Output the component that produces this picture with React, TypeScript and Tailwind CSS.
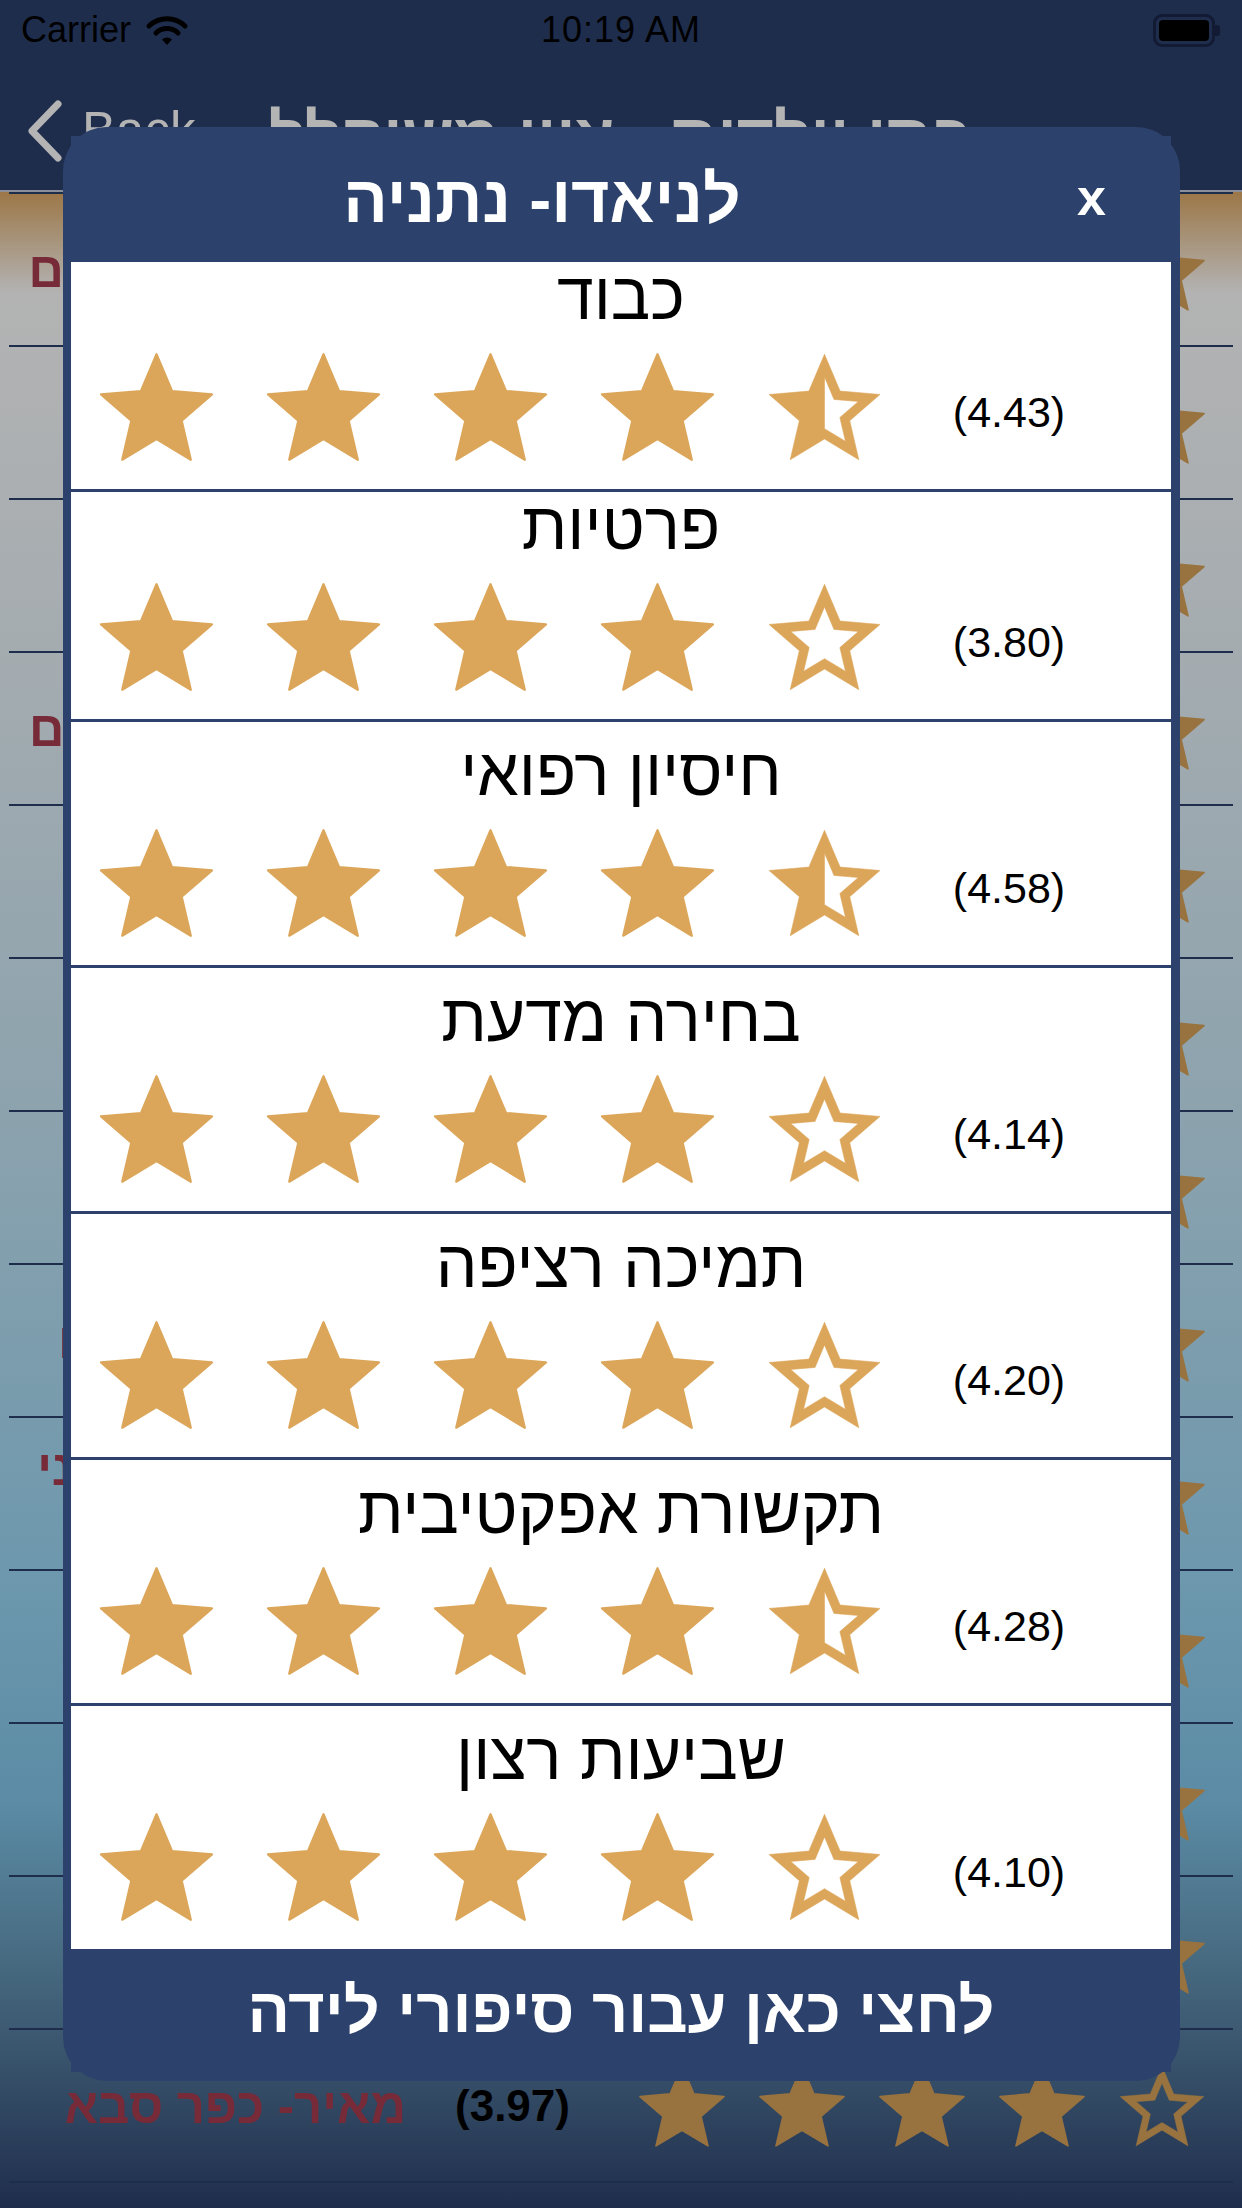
import React from "react"

type Kind = "full" | "half" | "empty"

const starPaths: Record<Kind, string> = {
    full: "M12 17.27L18.18 21l-1.64-7.03L22 9.24l-7.19-.61L12 2 9.19 8.63 2 9.24l5.46 4.73L5.82 21z",
    half: "M22 9.24l-7.19-.62L12 2 9.19 8.63 2 9.24l5.46 4.73L5.82 21 12 17.27 18.18 21l-1.63-7.03L22 9.24zM12 15.4V6.1l1.71 4.04 4.38.38-3.32 2.88 1 4.28L12 15.4z",
    empty: "M22 9.24l-7.19-.62L12 2 9.19 8.63 2 9.24l5.46 4.73L5.82 21 12 17.27 18.18 21l-1.63-7.03L22 9.24zM12 15.4l-3.76 2.27 1-4.28-3.32-2.88 4.38-.38L12 6.1l1.71 4.04 4.38.38-3.32 2.88 1 4.28L12 15.4z",
}

function Star({ kind, className }: { kind: Kind; className: string }) {
    return (
        <svg viewBox="2 2 20 19" className={`overflow-visible shrink-0 ${className}`}>
            <path
                d={starPaths[kind]}
                fill="currentColor"
                fillRule="evenodd"
                stroke="currentColor"
                strokeWidth={kind === "full" ? 0.4 : 0.1}
                strokeLinejoin="round"
            />
        </svg>
    )
}

const categories: { title: string; rating: string; stars: Kind[]; short?: boolean }[] = [
    { title: "כבוד", rating: "4.43", stars: ["full", "full", "full", "full", "half"], short: true },
    { title: "פרטיות", rating: "3.80", stars: ["full", "full", "full", "full", "empty"], short: true },
    { title: "חיסיון רפואי", rating: "4.58", stars: ["full", "full", "full", "full", "half"] },
    { title: "בחירה מדעת", rating: "4.14", stars: ["full", "full", "full", "full", "empty"] },
    { title: "תמיכה רציפה", rating: "4.20", stars: ["full", "full", "full", "full", "empty"] },
    { title: "תקשורת אפקטיבית", rating: "4.28", stars: ["full", "full", "full", "full", "half"] },
    { title: "שביעות רצון", rating: "4.10", stars: ["full", "full", "full", "full", "empty"] },
]

// rows of the list behind the popup, only their edges show
const hospitals: { name: string[]; rating: string; spacing?: string }[] = [
    { name: ["שערי צדק ירושלים"], rating: "4.62", spacing: "tracking-[-1.7px]" },
    { name: ["רמב\"ם - חיפה"], rating: "4.58" },
    { name: ["איכילוב"], rating: "4.55" },
    { name: ["הדסה - הר הצופים"], rating: "4.51", spacing: "tracking-[-1.7px]" },
    { name: ["בילינסון"], rating: "4.47" },
    { name: ["וולפסון"], rating: "4.40" },
    { name: ["ברזילי"], rating: "4.33" },
    { name: ["יוספטל - בת ים"], rating: "4.30", spacing: "tracking-[1.3px]" },
    { name: ["מרכז רפואי צפוני", "נהריה"], rating: "4.21" },
    { name: ["העמק"], rating: "4.15" },
    { name: ["סורוקה"], rating: "4.12" },
    { name: ["לניאדו - נתניה"], rating: "4.02" },
    { name: ["מאיר- כפר סבא"], rating: "3.97" },
]

function StatusBar() {
    return (
        <div className="h-[60px] flex items-center justify-between px-[21px] text-black text-[36px] font-['Liberation_Sans',sans-serif]">
            <div className="flex items-center gap-[14px] w-[300px]">
                <span>Carrier</span>
                <svg viewBox="0 0 44 32" className="w-[44px] h-[32px]">
                    <path d="M4 12a26 26 0 0 1 36 0" fill="none" stroke="black" strokeWidth="5" strokeLinecap="round" />
                    <path d="M11 19a16 16 0 0 1 22 0" fill="none" stroke="black" strokeWidth="5" strokeLinecap="round" />
                    <path d="M17 25.5l5 5.5 5-5.5a7.5 7.5 0 0 0-10 0z" fill="black" />
                </svg>
            </div>
            <span className="tracking-[1px]">10:19 AM</span>
            <div className="w-[300px] flex justify-end items-center pr-[1px]">
                <div className="w-[62px] h-[33px] border-[3px] border-[#121b33] rounded-[9px] p-[3px]">
                    <div className="w-full h-full bg-black rounded-[4px]" />
                </div>
                <div className="w-[5px] h-[11px] bg-[#121b33] rounded-r-[3px]" />
            </div>
        </div>
    )
}

function NavBar() {
    return (
        <div className="h-[132px] relative flex items-center justify-center border-b-[2px] border-[#8a8f99]">
            <div className="absolute left-[26px] top-[33px] flex items-center gap-[20px] text-[#b4b4b4]">
                <svg viewBox="0 0 36 62" className="w-[36px] h-[62px]">
                    <path d="M32 4L6 31l26 27" fill="none" stroke="currentColor" strokeWidth="7" strokeLinecap="round" strokeLinejoin="round" />
                </svg>
                <span className="text-[51px] font-['Liberation_Sans',sans-serif]">Back</span>
            </div>
            <h1 dir="rtl" className="text-[64px] font-bold text-[#b4b4b4] mt-[24px]">בתי יולדות - ציון משוקלל</h1>
        </div>
    )
}

function HospitalRow({ name, rating, spacing }: { name: string[]; rating: string; spacing?: string }) {
    return (
        <div className="mx-[9px] h-[153px] border-b-[2px] border-[#1f2d4d] flex items-center pr-[29px]">
            <div
                dir="rtl"
                className={`flex-1 min-w-0 flex flex-col items-start mr-[47px] text-[49px] leading-[52px] font-bold text-[#772a37] whitespace-nowrap ${spacing ?? ""}`}
            >
                {name.map((line) => (
                    <span key={line}>{line}</span>
                ))}
            </div>
            <span className="w-[119px] shrink-0 text-center text-[44px] font-bold text-black mr-[68px]">({rating})</span>
            <div className="flex gap-[36px] text-[#98733f]">
                {["full", "full", "full", "full", rating === "3.97" ? "empty" : "full"].map((k, i) => (
                    <Star key={i} kind={k as Kind} className="w-[84px] h-[80px]" />
                ))}
            </div>
        </div>
    )
}

function CategoryRow({ title, rating, stars, short }: { title: string; rating: string; stars: Kind[]; short?: boolean }) {
    return (
        <div className={`bg-white flex flex-col ${short ? "h-[227px] pt-[2px]" : "h-[243px] pt-[18px]"}`}>
            <p dir="rtl" className="text-center text-[66px] leading-[64px] text-black">{title}</p>
            <div className="flex items-center pl-[30px] mt-[26px] h-[106px]">
                <div className="flex gap-[56px] text-[#dca65a]">
                    {stars.map((k, i) => (
                        <Star key={i} kind={k} className="w-[111px] h-[106px]" />
                    ))}
                </div>
                <span className="ml-[29px] w-[200px] text-center text-[43px] text-black mt-[10px]">({rating})</span>
            </div>
        </div>
    )
}

export default function App() {
    return (
        <div className="relative w-[1242px] h-[2208px] overflow-hidden font-['Liberation_Sans','DejaVu_Sans',sans-serif]">
            <div className="bg-[#1f2d4d]">
                <StatusBar />
                <NavBar />
            </div>
            <div className="h-[2016px] bg-[linear-gradient(180deg,#9c7747_0%,#b3b3b3_5%,#a5acb0_22%,#8da3ae_45%,#6b97ad_70%,#5b8ba5_80%,#46697f_88%,#37516a_93%,#1f2d4c_100%)]">
                <div className="mx-[9px] h-[2px] bg-[#1f2d4d]" />
                {hospitals.map((h) => (
                    <HospitalRow key={h.name[0]} name={h.name} rating={h.rating} spacing={h.spacing} />
                ))}
            </div>

            <div className="absolute left-[63px] top-[127px] w-[1117px] h-[1954px] rounded-[44px] bg-[#2c426c] pt-[9px] pb-[9px] pl-[8px] pr-[9px]">
                <div className="h-full bg-[#2c426c] flex flex-col">
                    <div className="h-[126px] relative flex items-center justify-center">
                        <h2 dir="rtl" className="text-[66px] font-bold text-white mr-[158px]">לניאדו- נתניה</h2>
                        <span className="absolute right-[65px] top-[22px] text-[52px] font-bold text-white">x</span>
                    </div>
                    <div className="flex flex-col gap-[3px]">
                        {categories.map((c) => (
                            <CategoryRow key={c.title} {...c} />
                        ))}
                    </div>
                    <div className="flex-1 flex items-center justify-center">
                        <span dir="rtl" className="text-[63px] font-bold text-white">לחצי כאן עבור סיפורי לידה</span>
                    </div>
                </div>
            </div>
        </div>
    )
}
